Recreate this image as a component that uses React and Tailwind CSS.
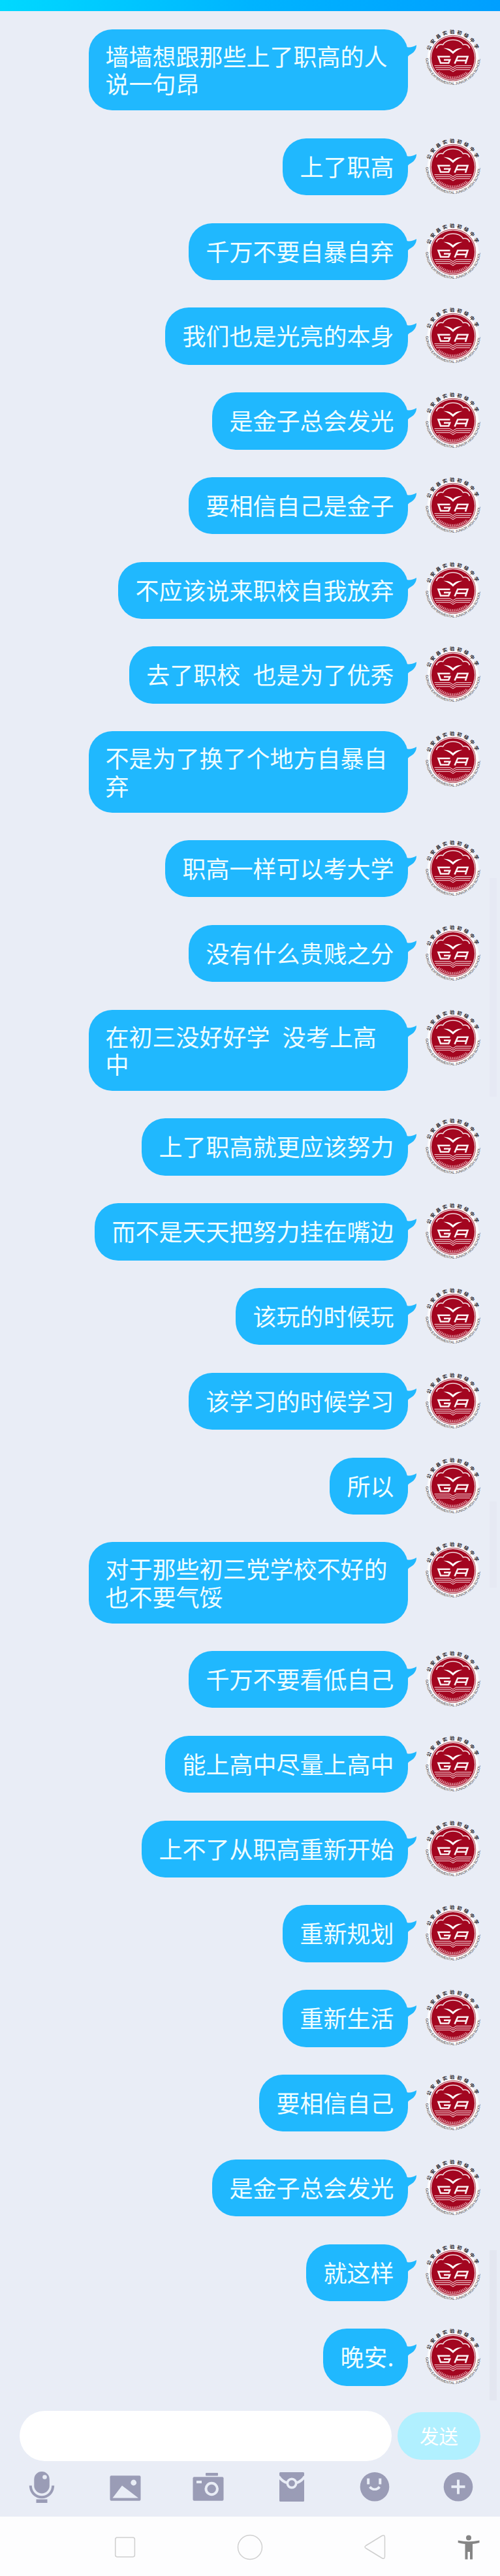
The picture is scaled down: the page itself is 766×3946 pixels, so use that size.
import React, { useId } from "react";

const messages = [
  "墙墙想跟那些上了职高的人\n说一句昂",
  "上了职高",
  "千万不要自暴自弃",
  "我们也是光亮的本身",
  "是金子总会发光",
  "要相信自己是金子",
  "不应该说来职校自我放弃",
  "去了职校  也是为了优秀",
  "不是为了换了个地方自暴自\n弃",
  "职高一样可以考大学",
  "没有什么贵贱之分",
  "在初三没好好学  没考上高\n中",
  "上了职高就更应该努力",
  "而不是天天把努力挂在嘴边",
  "该玩的时候玩",
  "该学习的时候学习",
  "所以",
  "对于那些初三党学校不好的\n也不要气馁",
  "千万不要看低自己",
  "能上高中尽量上高中",
  "上不了从职高重新开始",
  "重新规划",
  "重新生活",
  "要相信自己",
  "是金子总会发光",
  "就这样",
  "晚安.",
];

function Avatar() {
  const id = useId();
  const top = `${id}t`;
  const bottom = `${id}b`;
  return (
    <svg className="h-[88px] w-[88px] shrink-0 overflow-visible" viewBox="0 0 88 88" fill="none">
      <circle cx="44" cy="45" r="39.500" fill="#fbfafb" />
      <circle cx="44" cy="44" r="35.200" fill="#b04a58" />
      <circle cx="44" cy="44" r="34.200" fill="#f3dfe3" />
      <circle cx="44" cy="44" r="33.100" fill="#a30620" />
      <path id={top} d="M7.700 35.500A37.200 37.200 0 0 1 80.300 35.500" />
      <path id={bottom} d="M2.200 43A41.800 41.800 0 0 0 85.800 43" />
      <text fontSize="7.200" fontWeight="700" fill="#24201f" fontFamily="'Noto Sans CJK SC', sans-serif">
        <textPath href={`#${top}`} startOffset="3" textLength="92">公安县实验初级中学</textPath>
      </text>
      <text fontSize="5.400" fill="#3a3638" fontFamily="'Liberation Sans', sans-serif">
        <textPath href={`#${bottom}`} startOffset="1" textLength="128">GONGAN EXPERIMENTAL JUNIOR HIGH SCHOOL</textPath>
      </text>
      <path d="M18.500 29c1.500-5 5-6.500 10-5.500 3-5 8-7.500 15.500-7.500s12.500 2.500 15.500 7.500c5-1 8.500.5 10 5.500" stroke="#f3d9dd" strokeWidth="1.700" />
      <path d="M29.500 28.700c6 0 11.500 1.300 14.500 5 3-3.700 8.500-5 14.500-5-6 2-10 4.300-14.500 9-4.500-4.700-8.500-7-14.500-9z" fill="#fff" />
      <path d="M39.500 41.800H21.500L25 51.500H37.200L39.200 46.700H30" stroke="#fbeef0" strokeWidth="2.600" />
      <path d="M46.500 52.600L51.200 41.800H66.500L63 52.600M49.500 47.700H64" stroke="#fbeef0" strokeWidth="2.600" />
      <path d="M15.500 55.600H39l5 3.200 5-3.200h23.500M16.500 58.600H39l5 3.200 5-3.200h22.500M18 61.600h21l5 3.200 5-3.200h21" stroke="#eab8c0" strokeWidth="1.100" />
      <path d="M22 65.500Q44 82 66 65.500" stroke="#df98a3" strokeWidth="3.600" strokeDasharray="1.300 1.500" />
      <path d="M20.500 66Q44 85 67.500 66" stroke="#df98a3" strokeWidth="0.900" />
    </svg>
  );
}

function Message({ text }) {
  const double = text.includes("\n");
  return (
    <div className="flex items-start justify-end">
      <div
        className={
          "relative rounded-[36px] bg-[#20b8fe] pl-[26px] pr-[21.500px] " +
          (double ? "h-[124.400px] w-[489.500px] pt-[19px]" : "h-[87.400px] pt-[21px]")
        }
      >
        <p className="whitespace-pre text-[36px] leading-[42.300px] text-[#effdff] [word-spacing:1.500px]">{text}</p>
        <svg className="absolute -right-[13px] top-[24px] h-[20px] w-[16px]" viewBox="0 0 16 20">
          <path d="M0 3C6 4 11 3 16 0C16 7 12 12 5 15.500Q3 16.500 2 20H0Z" fill="#20b8fe" />
        </svg>
      </div>
      <div className="ml-[25px] mr-[28px] h-[87px]">
        <Avatar />
      </div>
    </div>
  );
}

const icon = "h-[50px] w-[50px]";

function Toolbar() {
  return (
    <div className="mt-[15px] flex justify-between px-[39px] text-[#9a9cb6]">
      <svg className={icon} viewBox="0 0 50 50">
        <rect x="13.300" y="1" width="23.500" height="33.500" rx="11.700" fill="currentColor" />
        <path d="M7.800 22.500C8.500 46 41.500 46 42.200 22.500" fill="none" stroke="currentColor" strokeWidth="4" />
        <rect x="16.500" y="43.500" width="17" height="5.500" fill="currentColor" />
        <circle cx="29.500" cy="9.500" r="3.300" fill="#e9edf6" />
      </svg>
      <svg className={icon} viewBox="0 0 50 50">
        <rect x="1.500" y="7.300" width="47" height="38.500" rx="2" fill="currentColor" />
        <circle cx="37.700" cy="18" r="4.400" fill="#e9edf6" />
        <path d="M5.500 41.500L20 22.500l25 19z" fill="#e9edf6" />
      </svg>
      <svg className={icon} viewBox="0 0 50 50">
        <rect x="1.500" y="9.200" width="47" height="36.600" rx="2" fill="currentColor" />
        <rect x="21" y="3" width="19" height="4.500" rx="1" fill="currentColor" />
        <rect x="7" y="15" width="8" height="4" fill="#e9edf6" />
        <circle cx="30.200" cy="27.500" r="8.700" fill="none" stroke="#e9edf6" strokeWidth="4" />
      </svg>
      <svg className={icon} viewBox="0 0 50 50">
        <rect x="6" y="2" width="38" height="45" rx="1.500" fill="currentColor" />
        <path d="M5 8.500C9 14 13 17.300 18 18.200M45 8.500C41 14 37 17.300 32 18.200" fill="none" stroke="#e9edf6" strokeWidth="4" />
        <circle cx="25" cy="19" r="6.700" fill="none" stroke="#e9edf6" strokeWidth="3.700" />
      </svg>
      <svg className={icon} viewBox="0 0 50 50">
        <circle cx="25" cy="24.300" r="22.300" fill="currentColor" />
        <path d="M15.200 11.500v9M33.300 11.500v9" stroke="#e9edf6" strokeWidth="4" />
        <path d="M17.500 24.500c4 5 11 5 15 0" fill="none" stroke="#e9edf6" strokeWidth="3.700" />
      </svg>
      <svg className={icon} viewBox="0 0 50 50">
        <circle cx="25" cy="24.300" r="22.300" fill="currentColor" />
        <path d="M14.500 24.300h21M25 13.500v22" stroke="#e9edf6" strokeWidth="4" />
      </svg>
    </div>
  );
}

function NavigationBar() {
  return (
    <nav className="mt-auto flex h-[91px] items-center bg-[#fdfdfe] pl-[171px] pt-[3px]">
      <svg className="h-[40px] w-[40px] shrink-0" viewBox="0 0 40 40" fill="none" stroke="#cfcfcf" strokeWidth="1.500">
        <rect x="5.700" y="5" width="29.700" height="29.700" rx="3" />
      </svg>
      <svg className="ml-[152px] h-[40px] w-[40px] shrink-0" viewBox="0 0 40 40" fill="none" stroke="#cfcfcf" strokeWidth="1.500">
        <circle cx="20" cy="20" r="18.500" />
      </svg>
      <svg className="ml-[152px] h-[40px] w-[40px] shrink-0" viewBox="0 0 40 40" fill="none" stroke="#cfcfcf" strokeWidth="1.500">
        <path d="M5.500 17.500L30 2.500Q34.500 0 34.500 5V34Q34.500 39 30 36.500L5.500 21.500Q2.500 19.500 5.500 17.500Z" />
      </svg>
      <svg className="ml-[103px] h-[40px] w-[40px] shrink-0" viewBox="0 0 40 40" fill="#858585">
        <circle cx="20" cy="5.500" r="4" />
        <path d="M3.700 9.500Q20 13 36.500 9.500V13Q31 14.500 26 15V38.500H22V27H18.500V38.500H14.500V15Q9 14.500 3.700 13Z" />
      </svg>
    </nav>
  );
}

export default function App() {
  return (
    <div className="relative flex h-[3946px] w-[766px] flex-col overflow-hidden bg-[#e9edf6] font-['Noto_Sans_CJK_SC',sans-serif]">
      <header className="h-[17px] shrink-0 bg-linear-to-r from-[#00d9ff] via-[#00b4ff] to-[#009fff]" />
      <main className="flex shrink-0 flex-col gap-[42.400px] pt-[28px]">
        {messages.map((text, i) => (
          <Message key={i} text={text} />
        ))}
      </main>
      <div className="mt-[38px] flex items-center pl-[30px]">
        <div className="h-[77px] w-[570px] rounded-full bg-white" />
        <button className="ml-[9px] h-[73px] w-[127px] rounded-full bg-[#b1f0ff] pb-[3px] text-[29.500px] text-white">发送</button>
      </div>
      <Toolbar />
      <NavigationBar />
      <div className="absolute right-[5px] top-[1345px] h-[335px] w-[11px] bg-[#e6e9f4]" />
      <div className="absolute right-[5px] top-[2300px] h-[132px] w-[11px] bg-[#e6e9f3]" />
      <div className="absolute right-[5px] top-[3447px] h-[230px] w-[11px] bg-[#e3e6f0]" />
    </div>
  );
}
